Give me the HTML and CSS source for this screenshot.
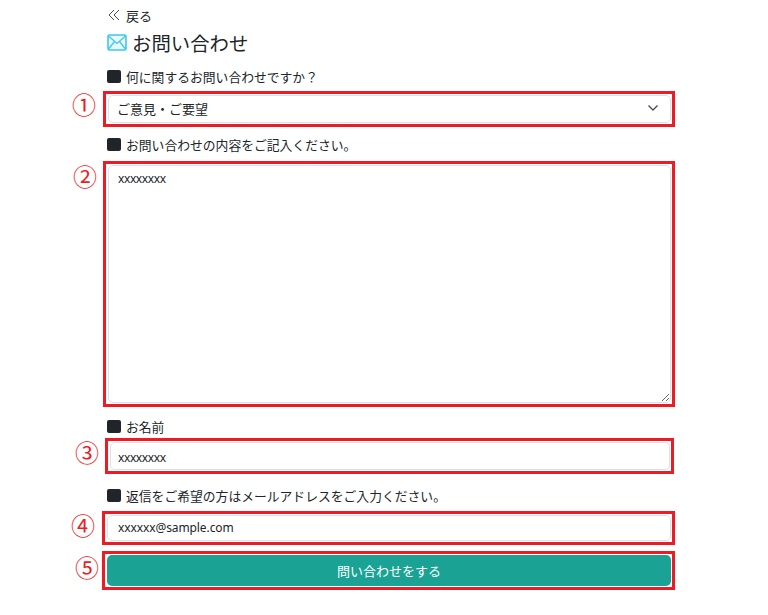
FILE: index.html
```html
<!DOCTYPE html>
<html lang="ja">

<head>
    <meta charset="UTF-8">
    <meta name="viewport" content="width=device-width, initial-scale=1.0">
    <title>お問い合わせ</title>
    <link rel="stylesheet" href="styles.css">
</head>

<body>
    <div class="container">
        <a class="back-link" href="#">
            <svg class="back-icon" width="12" height="12" viewBox="0 0 12 12">
                <path d="M6 1 L1 6 L6 11 M11 1 L6 6 L11 11" fill="none" stroke="#343a40" stroke-width="0.9"/>
            </svg>
            戻る
        </a>
        <h1 class="page-title">
            <svg class="mail-icon" width="20" height="17" viewBox="0 0 20 17">
                <rect x="1" y="1" width="18" height="15" rx="1.5" fill="#eafaff" stroke="#3cc8f0" stroke-width="1.6"/>
                <path d="M1.5 2 L10 9.5 L18.5 2 M1.5 15 L7.5 7.5 M18.5 15 L12.5 7.5" fill="none" stroke="#3cc8f0" stroke-width="1.3"/>
            </svg>
            お問い合わせ
        </h1>

        <form class="contact-form">
            <label class="form-label label-topic"><span class="square"></span>何に関するお問い合わせですか？</label>
            <div class="mark mark-select">
                <span class="num num-1">①</span>
                <div class="field select-field">
                    ご意見・ご要望
                    <svg class="chevron" width="12" height="8" viewBox="0 0 12 8">
                        <path d="M1.5 1.5 L6 6 L10.5 1.5" fill="none" stroke="#4a4f55" stroke-width="1.4"/>
                    </svg>
                </div>
            </div>

            <label class="form-label label-message"><span class="square"></span>お問い合わせの内容をご記入ください。</label>
            <div class="mark mark-message">
                <span class="num num-2">②</span>
                <textarea class="field message-field">xxxxxxxx</textarea>
            </div>

            <label class="form-label label-name"><span class="square"></span>お名前</label>
            <div class="mark mark-name">
                <span class="num num-3">③</span>
                <input class="field" type="text" value="xxxxxxxx">
            </div>

            <label class="form-label label-email"><span class="square"></span>返信をご希望の方はメールアドレスをご入力ください。</label>
            <div class="mark mark-email">
                <span class="num num-4">④</span>
                <input class="field" type="text" value="xxxxxx@sample.com">
            </div>

            <div class="mark mark-submit">
                <span class="num num-5">⑤</span>
                <button type="button" class="btn-submit">問い合わせをする</button>
            </div>
        </form>
    </div>
</body>

</html>
```

FILE: styles.css
```css
body {
    font-family: "Noto Sans", "Noto Sans CJK JP", sans-serif;
    color: #212529;
    background-color: #fff;
    margin: 0;
    padding: 0;
}

.container {
    width: 573px;
    margin-left: 102px;
    padding-top: 6px;
}

.back-link {
    display: flex;
    align-items: center;
    gap: 6px;
    height: 18px;
    margin-left: 6px;
    font-size: 13px;
    color: #212529;
    text-decoration: none;
}

.page-title {
    display: flex;
    align-items: center;
    gap: 5px;
    height: 28px;
    margin: 4px 0 0 5px;
    font-size: 19.4px;
    font-weight: 400;
}

.form-label {
    display: flex;
    align-items: center;
    height: 18px;
    margin: 11px 0 0 5px;
    font-size: 12.8px;
}

.square {
    width: 14px;
    height: 13px;
    margin-right: 5px;
    border-radius: 2px;
    background-color: #212529;
}

.mark {
    position: relative;
    box-sizing: border-box;
    border: 3px solid #ed1c24;
    padding: 1px 1px 1px 2px;
}

.num {
    position: absolute;
    font-size: 24px;
    line-height: 24px;
    color: #ed1c24;
}

.num-1 { left: -34px; top: -1px; }
.num-2 { left: -33px; top: 1px; }
.num-3 { left: -33px; top: 0; }
.num-4 { left: -34px; top: 0; }
.num-5 { left: -30px; top: 2px; }

.field {
    display: block;
    width: 100%;
    height: 100%;
    box-sizing: border-box;
    padding: 0 10px;
    border: 1px solid #dee2e6;
    border-radius: 5px;
    font-family: "Noto Sans", "Noto Sans CJK JP", sans-serif;
    font-size: 12px;
    letter-spacing: -0.1px;
    color: #212529;
    background-color: #fff;
}

.label-topic {
    margin-top: 11px;
}

.mark-select {
    height: 36px;
    margin-top: 6px;
    margin-left: 1px;
}

.select-field {
    display: flex;
    align-items: center;
    justify-content: space-between;
    padding: 0 11px 2px 8px;
    font-size: 13px;
    letter-spacing: 0;
}

.label-message {
    margin-top: 8px;
}

.mark-message {
    height: 246px;
    margin-top: 8px;
    margin-left: 1px;
}

.message-field {
    padding: 4px 9px 0;
    letter-spacing: -0.4px;
    resize: both;
}

.label-name {
    margin-top: 10px;
}

.mark-name {
    height: 36px;
    margin-top: 3px;
    margin-left: 3px;
    margin-right: 1px;
}

.mark-name .field {
    padding: 3px 7px 0;
    letter-spacing: -0.4px;
}

.label-email {
    margin-top: 12px;
}

.mark-email {
    height: 34px;
    margin-top: 7px;
}

.mark-email .field {
    padding-bottom: 2px;
}

.mark-submit {
    height: 39px;
    margin-top: 6px;
}

.btn-submit {
    display: block;
    width: 100%;
    height: 100%;
    border: none;
    border-radius: 5px;
    background-color: #1aa394;
    color: #fff;
    font-family: "Noto Sans", "Noto Sans CJK JP", sans-serif;
    font-size: 13px;
}
```
